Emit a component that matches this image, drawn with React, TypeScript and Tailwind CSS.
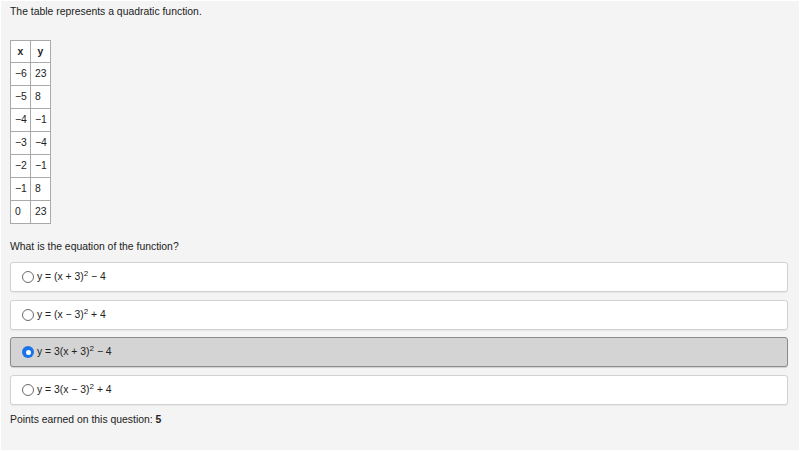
import { useState } from 'react';

const rows: [string, string][] = [
  ['−6', '23'],
  ['−5', '8'],
  ['−4', '−1'],
  ['−3', '−4'],
  ['−2', '−1'],
  ['−1', '8'],
  ['0', '23'],
];

const options = [
  { pre: 'y = (x + 3)', post: ' − 4' },
  { pre: 'y = (x − 3)', post: ' + 4' },
  { pre: 'y = 3(x + 3)', post: ' − 4' },
  { pre: 'y = 3(x − 3)', post: ' + 4' },
];

function Radio({ checked }: { checked: boolean }) {
  if (checked) {
    return (
      <span className="flex h-[12px] w-[12px] shrink-0 items-center justify-center rounded-full bg-[#1a73e8]">
        <span className="h-[5px] w-[5px] rounded-full bg-white" />
      </span>
    );
  }
  return <span className="h-[12px] w-[12px] shrink-0 rounded-full border border-[#6b6b6b] bg-white" />;
}

export default function App() {
  const [selected, setSelected] = useState(2);

  return (
    <div className="h-[451px] w-[800px] overflow-hidden border border-white bg-[#f4f4f4] font-['Liberation_Sans',Arial,sans-serif] text-[10.4px] text-[#222]">
      <div className="px-[9px] pt-[4px]">
        <p className="leading-[14px]">The table represents a quadratic function.</p>

        {/* 표 */}
        <table className="mt-[21px] border-collapse border border-[#888] bg-white">
          <thead>
            <tr className="h-[22px]">
              <th className="w-[20px] border border-[#aaa] text-center font-bold">x</th>
              <th className="w-[20px] border border-[#aaa] text-center font-bold">y</th>
            </tr>
          </thead>
          <tbody>
            {rows.map(([x, y], i) => (
              <tr key={i} className="h-[23px]">
                <td className="border border-[#aaa] pl-[4px] pr-[3px]">{x}</td>
                <td className="border border-[#aaa] pl-[4px] pr-[3px]">{y}</td>
              </tr>
            ))}
          </tbody>
        </table>

        <p className="mt-[16px] leading-[14px]">What is the equation of the function?</p>

        {/* 선택지 */}
        <div className="mt-[8px] flex w-[778px] flex-col gap-[7.6px]">
          {options.map((opt, i) => {
            const isSel = selected === i;
            return (
              <button
                key={i}
                type="button"
                onClick={() => setSelected(i)}
                className={
                  isSel
                    ? 'flex h-[30px] items-center gap-[3px] rounded-[3px] border border-[#8c8c8c] bg-[#d4d4d4] pl-[11px] text-left shadow-[0_1px_1px_rgba(0,0,0,0.15)]'
                    : 'flex h-[30px] items-center gap-[3px] rounded-[3px] border border-[#d2d2d2] bg-white pl-[11px] text-left shadow-[0_1px_1px_rgba(0,0,0,0.06)]'
                }
              >
                <Radio checked={isSel} />
                <span className="leading-[14px]">
                  {opt.pre}
                  <sup className="text-[8px]">2</sup>
                  {opt.post}
                </span>
              </button>
            );
          })}
        </div>

        <p className="mt-[8px] leading-[14px]">
          Points earned on this question: <span className="font-bold">5</span>
        </p>
      </div>
    </div>
  );
}
